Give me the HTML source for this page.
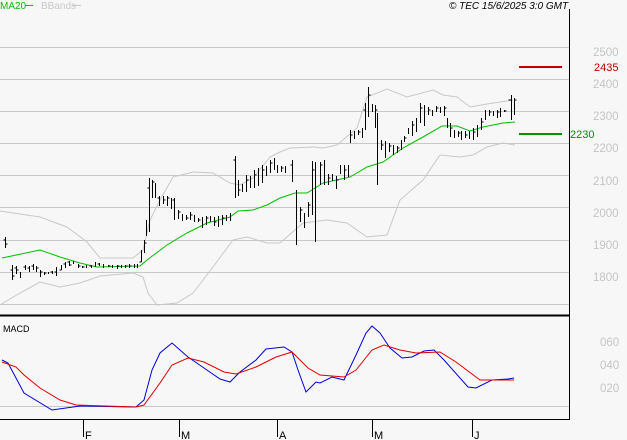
<!DOCTYPE html>
<html><head><meta charset="utf-8"><style>
html,body{margin:0;padding:0;background:#f7f7f7;}
svg{display:block;}
text{font-family:"Liberation Sans",sans-serif;}
</style></head><body>
<svg width="627" height="440" viewBox="0 0 627 440" xmlns="http://www.w3.org/2000/svg">
<rect width="627" height="440" fill="#f7f7f7"/>
<g stroke="#c8c8c8" stroke-width="1">
<line x1="0" y1="47.5" x2="569" y2="47.5"/>
<line x1="0" y1="79.5" x2="569" y2="79.5"/>
<line x1="0" y1="111.5" x2="569" y2="111.5"/>
<line x1="0" y1="143.5" x2="569" y2="143.5"/>
<line x1="0" y1="175.5" x2="569" y2="175.5"/>
<line x1="0" y1="207.5" x2="569" y2="207.5"/>
<line x1="0" y1="240.5" x2="569" y2="240.5"/>
<line x1="0" y1="272.5" x2="569" y2="272.5"/>
<line x1="0" y1="304.5" x2="569" y2="304.5"/>
<line x1="0" y1="406.5" x2="569" y2="406.5"/>
</g>
<line x1="569.5" y1="9" x2="569.5" y2="419" stroke="#000"/>
<line x1="0" y1="315.5" x2="570" y2="315.5" stroke="#000" stroke-width="2"/>
<line x1="0" y1="419.5" x2="570" y2="419.5" stroke="#000"/>
<g stroke="#000">
<line x1="83.5" y1="419" x2="83.5" y2="437"/>
<line x1="179.5" y1="419" x2="179.5" y2="437"/>
<line x1="277.5" y1="419" x2="277.5" y2="437"/>
<line x1="372.5" y1="419" x2="372.5" y2="437"/>
<line x1="472.5" y1="419" x2="472.5" y2="437"/>
</g>
<g font-size="11" fill="#000">
<text x="85" y="439">F</text><text x="181" y="439">M</text><text x="279" y="439">A</text><text x="374" y="439">M</text><text x="474" y="439">J</text>
</g>
<text x="0" y="9" font-size="10" fill="#00c000">MA20</text>
<line x1="25" y1="5.5" x2="33" y2="5.5" stroke="#00c000"/>
<text x="41" y="9" font-size="10" fill="#c8c8c8">BBands</text>
<line x1="72" y1="5.5" x2="81" y2="5.5" stroke="#c8c8c8"/>
<text x="449" y="9" font-size="10" font-style="italic" fill="#000">© TEC 15/6/2025 3:0 GMT</text>
<g font-size="11.5" fill="#c4c4c4">
<text x="593" y="56">2500</text><text x="593" y="88">2400</text><text x="593" y="120">2300</text><text x="593" y="152">2200</text><text x="593" y="185">2100</text><text x="593" y="217">2000</text><text x="593" y="249">1900</text><text x="593" y="281">1800</text>
<text x="600" y="346">060</text><text x="600" y="369">040</text><text x="600" y="392">020</text>
</g>
<line x1="519" y1="67" x2="562" y2="67" stroke="#c00000" stroke-width="2"/>
<text x="594" y="71" font-size="11" fill="#c00000">2435</text>
<line x1="519" y1="134" x2="562" y2="134" stroke="#009000" stroke-width="2"/>
<text x="570" y="138" font-size="11" fill="#009000">2230</text>
<g fill="none" stroke="#c8c8c8" stroke-width="1">
<polyline points="0,211 40,217 67,227 87,242 100,258 133,258 143,250 150,220 160,200 173,177 193,172 213,173 230,183 240,185 253,178 270,157 280,152 290,148 313,147 323,148 337,145 357,128 367,97 387,89 407,97 433,90 443,95 457,97 470,107 487,104 513,100"/>
<polyline points="0,305 20,293 40,282 60,287 80,283 100,276 133,273 143,277 148,293 157,305 177,303 193,293 213,267 233,240 247,237 267,243 280,243 303,223 327,220 347,223 367,237 387,235 400,200 423,180 440,155 460,157 473,155 487,147 503,143 515,145"/>
</g>
<polyline fill="none" stroke="#00c000" stroke-width="1" points="2,258 40,250 60,257 80,263 97,267 140,266 147,260 167,245 187,233 207,223 230,217 238,211 253,210 267,205 280,198 295,193 307,193 323,183 350,177 367,167 383,162 403,148 423,137 442,126 457,126 470,131 483,127 503,123 515,122"/>
<g transform="translate(0.5,0)" shape-rendering="crispEdges">
<path fill="none" stroke="#000" stroke-width="1" d="
M5,237V248
M12,265V280M16,266V274M20,272V278M25,265V270M29,266V272M33,264V270M36,266V272M40,270V277M44,272V275M48,272V274M52,271V274M56,267V276M61,265V270M65,262V268M69,261V266M73,261V264M78,264V268M82,266V268M86,265V268M91,265V268M95,262V267M99,263V266M103,264V268M108,265V267M112,265V268M117,265V269M121,265V268M125,265V268M129,264V268M134,264V268M137,264V268
M141,250V262M144,240V253M146,220V236M149,178V232M152,180V198M155,183V198M159,196V206M163,196V204M167,196V206M171,198V209M174,198V220M178,210V219M182,214V221M186,215V220M190,212V220M194,215V222M198,218V222M202,217V228M206,216V225M210,216V222M214,217V226M218,216V227M222,215V225M226,215V221M230,213V221
M235,156V198M238,180V196M242,184V192M246,175V192M250,176V188M254,170V188M258,168V186M262,165V183M266,166V176M270,160V173M274,158V170M277,165V173M281,166V172M285,166V173M292,160V182M296,190V245M300,207V222M304,213V228M308,202V217M312,161V215M315,162V242M320,162V185M324,160V185M328,174V185M332,174V181M336,176V189M340,165V174M344,165V180M348,165V177
M350,130V143M354,131V139M358,130V135M362,128V138M365,103V130M368,87V117M372,104V112M375,105V128M377,113V185M381,140V150M385,141V158M389,143V152M393,145V155M397,146V153M401,140V150M404,136V142M408,128V134M412,121V136M416,118V132M420,103V123M424,105V126M428,107V115M432,110V116M436,106V112M440,107V113M444,106V116M447,118V128M450,123V137M454,130V138M458,131V137M461,131V140M465,131V138M469,131V139M473,128V140M477,125V137M481,118V130M485,110V120M489,110V116M493,111V116M497,110V118M500,108V117M504,110V112M511,95V120M514,98V115
"/>
<path fill="none" stroke="#000" stroke-width="1" d="
M3,240H5M5,244H7M10,270H12M12,276H14M14,268H16M16,270H18M23,267H25M27,268H29M31,266H33M36,268H38M40,272H42M44,273H46M50,272H52M54,272H56M59,270H61M63,264H65M67,262H69M69,265H71M78,266H80M82,267H84M89,266H91M97,264H99M108,266H110M117,266H119M125,266H127M129,266H131M139,262H141M144,243H146M147,188H149M152,182H154M157,198H159M163,200H165M167,198H169M172,200H174M178,212H180M186,218H188M190,215H192M198,220H200M206,218H208M214,222H216M222,218H224M233,160H235M238,190H240M246,180H248M254,175H256M262,170H264M270,163H272M281,168H283M290,165H292M300,210H302M308,205H310M312,170H314M320,165H322M328,178H330M336,180H338M344,170H346M350,135H352M358,132H360M363,110H365M368,95H370M375,110H377M381,145H383M389,146H391M397,148H399M404,138H406M412,125H414M420,108H422M428,110H430M436,108H438M444,108H446M450,128H452M458,133H460M465,135H467M473,132H475M481,122H483M489,112H491M497,112H499M504,111H506M508,100H511M514,100H516"/>
</g>
<text x="3" y="332" font-size="9" fill="#000">MACD</text>
<polyline fill="none" stroke="#0000e0" stroke-width="1" points="2,360 8,363 24,393 52,410 80,406 136,407 144,400 152,370 160,353 172,343 188,357 204,368 220,379 230,382 240,372 256,360 266,349 284,347 292,352 298,370 306,392 316,382 320,383 332,377 344,380 356,355 366,333 372,326 380,333 390,348 402,358 412,357 424,351 434,350 444,360 468,387 476,388 492,380 508,379 514,378"/>
<polyline fill="none" stroke="#e00000" stroke-width="1" points="2,362 16,367 24,375 40,388 60,400 76,405 136,407 144,405 160,383 172,365 188,358 204,362 224,372 236,374 256,367 276,357 292,352 308,368 320,375 344,377 356,370 372,350 384,345 400,350 416,353 440,352 456,362 480,380 492,380 514,380"/>
</svg>
</body></html>
